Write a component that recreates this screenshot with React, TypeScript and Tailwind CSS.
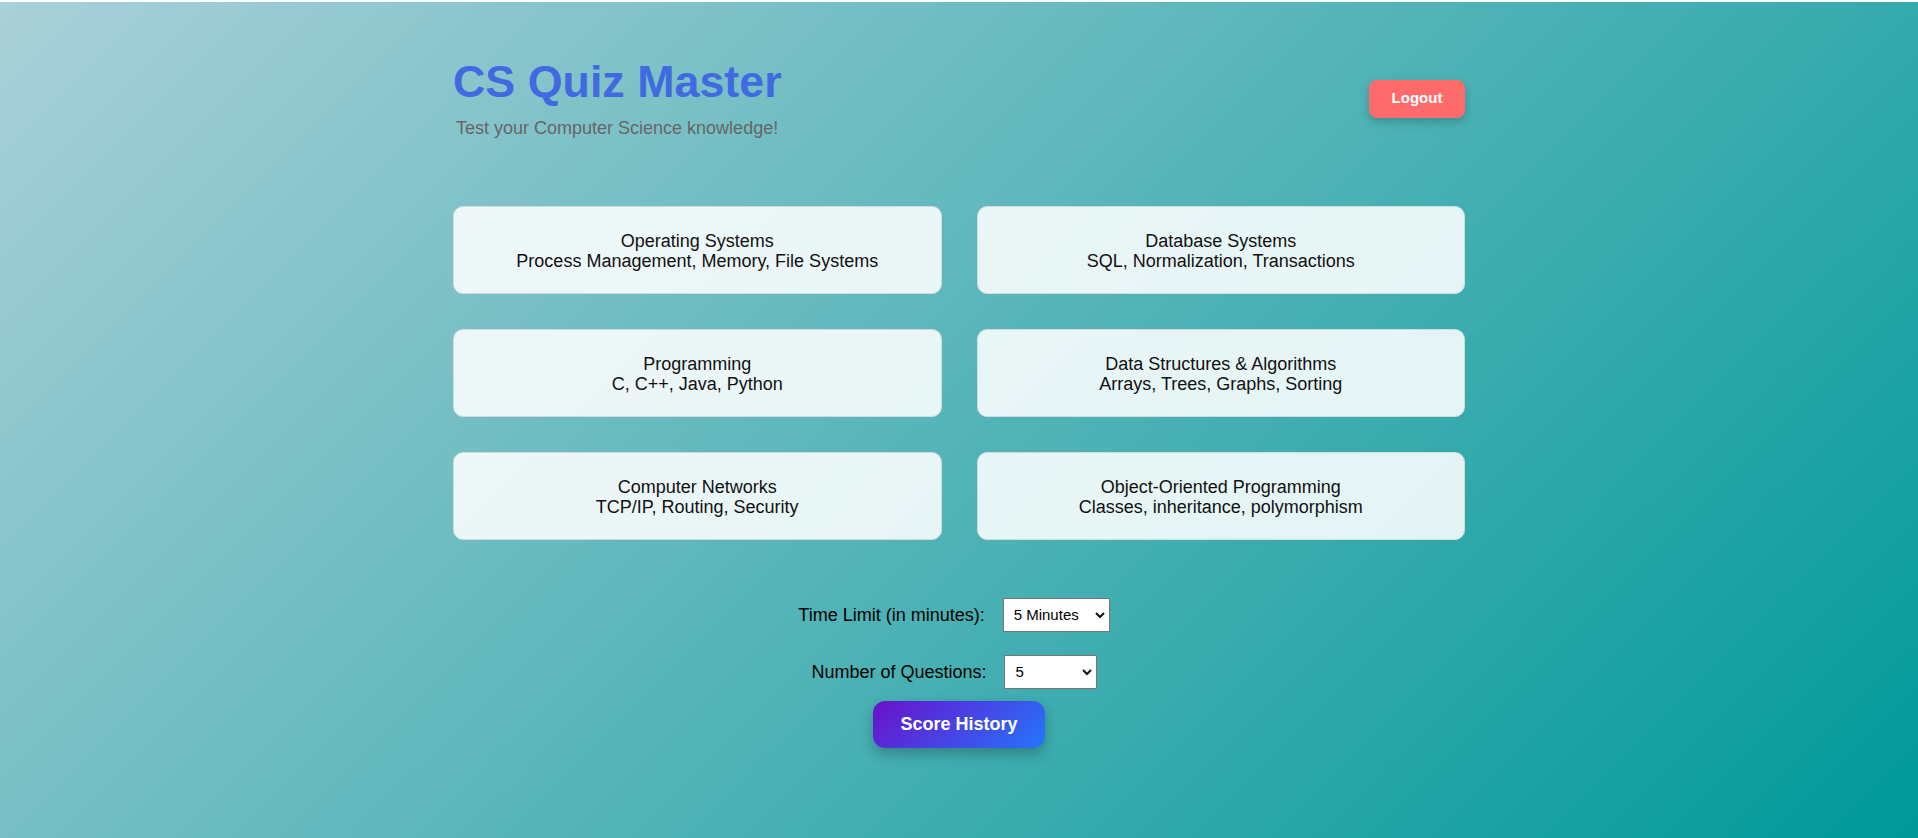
import { useState } from 'react';

const topics = [
  { title: 'Operating Systems', desc: 'Process Management, Memory, File Systems' },
  { title: 'Database Systems', desc: 'SQL, Normalization, Transactions' },
  { title: 'Programming', desc: 'C, C++, Java, Python' },
  { title: 'Data Structures & Algorithms', desc: 'Arrays, Trees, Graphs, Sorting' },
  { title: 'Computer Networks', desc: 'TCP/IP, Routing, Security' },
  { title: 'Object-Oriented Programming', desc: 'Classes, inheritance, polymorphism' },
];

function Chevron() {
  return (
    <svg
      width="10"
      height="7"
      viewBox="0 0 10 7"
      className="pointer-events-none absolute top-1/2 right-[5px] -translate-y-1/2"
    >
      <polyline points="1,1.5 5,5.5 9,1.5" fill="none" stroke="#111" strokeWidth="2" />
    </svg>
  );
}

export default function App() {
  const [timeLimit, setTimeLimit] = useState('5');
  const [count, setCount] = useState('5');

  return (
    <div className="bg-white pt-[2px] font-['Liberation_Sans',Arial,sans-serif]">
      <div className="min-h-[836px] bg-[linear-gradient(135deg,#aad0d8,#009999)]">
        <div className="mx-auto w-[1012px] pt-[52px]">
          {/* Header */}
          <header className="flex items-center justify-between">
            <div>
              <h1 className="text-[44.8px] leading-[54px] font-bold text-[#4169e1]">CS Quiz Master</h1>
              <p className="mt-[10px] ml-[3px] text-[18px] leading-[21px] text-[#666]">
                Test your Computer Science knowledge!
              </p>
            </div>
            <button className="mt-[4px] h-[38px] w-[96px] rounded-[8px] bg-[#ff6b6b] text-[15px] font-bold text-white shadow-[0_4px_10px_rgba(0,0,0,0.2)]">
              Logout
            </button>
          </header>

          {/* Topic cards */}
          <div className="mt-[67px] grid grid-cols-2 gap-[35px]">
            {topics.map((t) => (
              <button
                key={t.title}
                className="rounded-[10px] border border-[#d0dcdc] bg-white/[0.87] pt-[24px] pb-[22px] text-center text-[18px] leading-[20px] text-[#111]"
              >
                {t.title}
                <br />
                {t.desc}
              </button>
            ))}
          </div>

          {/* Settings */}
          <div className="mt-[58px] flex flex-col items-center text-[18px] text-black">
            <div className="flex items-center">
              <label className="mr-[18px]">Time Limit (in minutes):</label>
              <div className="relative mr-[10px]">
                <select
                  value={timeLimit}
                  onChange={(e) => setTimeLimit(e.target.value)}
                  className="block h-[34px] w-[107px] appearance-none border border-[#767676] bg-white pl-[10px] text-[15px] text-black"
                >
                  <option value="5">5 Minutes</option>
                  <option value="10">10 Minutes</option>
                  <option value="15">15 Minutes</option>
                </select>
                <Chevron />
              </div>
            </div>
            <div className="mt-[23px] flex items-center">
              <label className="mr-[17px]">Number of Questions:</label>
              <div className="relative mr-[10px]">
                <select
                  value={count}
                  onChange={(e) => setCount(e.target.value)}
                  className="block h-[34px] w-[93px] appearance-none border border-[#767676] bg-white pl-[11px] text-[15px] text-black"
                >
                  <option value="5">5</option>
                  <option value="10">10</option>
                  <option value="15">15</option>
                </select>
                <Chevron />
              </div>
            </div>
            <button className="mt-[12px] h-[47px] w-[172px] rounded-[12px] bg-[linear-gradient(135deg,#6a11cb,#2575fc)] text-[18px] font-bold text-white shadow-[0_6px_14px_rgba(0,0,0,0.25)]">
              Score History
            </button>
          </div>
        </div>
      </div>
    </div>
  );
}
